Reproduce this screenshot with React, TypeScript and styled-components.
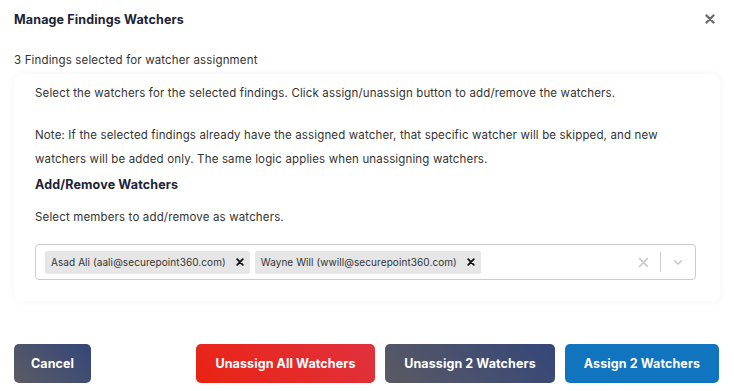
import styled, { createGlobalStyle } from "styled-components";

const GlobalStyle = createGlobalStyle`
  html, body {
    margin: 0;
    padding: 0;
    background: #ffffff;
  }
  body {
    font-family: Inter, "Noto Sans", "Liberation Sans", sans-serif;
    color: #333333;
  }
  * {
    box-sizing: border-box;
  }
`;

const Modal = styled.div`
  width: 734px;
  height: 391px;
  padding: 0 15px 0 14px;
  display: flex;
  flex-direction: column;
`;

const Header = styled.div`
  display: flex;
  align-items: center;
  justify-content: space-between;
  height: 38px;
  padding-right: 4px;
`;

const Title = styled.h2`
  margin: 0;
  font-size: 12.5px;
  font-weight: 700;
  letter-spacing: 0.15px;
  color: #1b2236;
`;

const CloseButton = styled.button`
  border: none;
  background: none;
  padding: 0;
  display: flex;
  color: #6b6b6b;
  cursor: pointer;
`;

const Subtitle = styled.p`
  margin: 12px 0 4px;
  font-size: 11.5px;
  line-height: 20px;
  letter-spacing: 0.15px;
  color: #333333;
`;

const Card = styled.div`
  width: 706px;
  padding: 7px 24px 21px 21px;
  border-radius: 8px;
  background: #ffffff;
  box-shadow: 0 0 10px rgba(0, 0, 0, 0.045);
`;

const Paragraph = styled.p<{ gap?: number }>`
  margin: 0 0 ${(p) => p.gap ?? 0}px;
  font-size: 11.5px;
  line-height: 24px;
  letter-spacing: 0.15px;
  white-space: nowrap;
  color: #333333;
`;

const SectionTitle = styled.h3`
  margin: 4px 0 10px;
  font-size: 12.5px;
  line-height: 20px;
  font-weight: 700;
  letter-spacing: 0.15px;
  color: #1b2236;
`;

const SelectBox = styled.div`
  display: flex;
  align-items: center;
  height: 36px;
  margin-top: 15px;
  border: 1px solid #cccccc;
  border-radius: 4px;
  padding: 0 0 0 9px;
`;

const ChipList = styled.div`
  flex: 1;
  display: flex;
  gap: 5px;
`;

const Chip = styled.div`
  display: flex;
  align-items: center;
  height: 23px;
  background: #e6e6e6;
  border-radius: 2px;
  font-size: 10px;
  letter-spacing: 0.08px;
  color: #333333;
`;

const ChipLabel = styled.span`
  padding: 0 4px 0 6px;
`;

const ChipRemove = styled.span`
  display: flex;
  align-items: center;
  justify-content: center;
  width: 20px;
  height: 100%;
  color: #111111;
`;

const Indicators = styled.div`
  display: flex;
  align-items: center;
  height: 100%;
`;

const IndicatorButton = styled.span`
  display: flex;
  align-items: center;
  justify-content: center;
  width: 34px;
  height: 100%;
  color: #cccccc;
`;

const Separator = styled.span`
  width: 1px;
  height: 20px;
  background: #cccccc;
`;

const Footer = styled.div`
  display: flex;
  align-items: center;
  gap: 10px;
  margin-top: 43px;
`;

const Spacer = styled.div`
  flex: 1;
`;

const variants = {
  cancel: "linear-gradient(45deg, #5b5b63 0%, #34467a 100%)",
  danger: "linear-gradient(45deg, #ea2312 0%, #e0323f 100%)",
  dark: "linear-gradient(45deg, #5a5a62 0%, #34467a 100%)",
  primary: "#1174bf",
};

const ActionButton = styled.button<{ variant: keyof typeof variants; width: number }>`
  width: ${(p) => p.width}px;
  height: 39px;
  border: none;
  border-radius: 5px;
  background: ${(p) => variants[p.variant]};
  color: #ffffff;
  font-family: inherit;
  font-size: 12.5px;
  font-weight: 700;
  letter-spacing: 0.1px;
  cursor: pointer;
`;

function XIcon({ size, stroke }: { size: number; stroke: number }) {
  return (
    <svg width={size} height={size} viewBox="0 0 10 10" fill="none">
      <path d="M1.5 1.5L8.5 8.5M8.5 1.5L1.5 8.5" stroke="currentColor" strokeWidth={stroke} strokeLinecap="round" />
    </svg>
  );
}

function ChevronDown() {
  return (
    <svg width="14" height="14" viewBox="0 0 20 20" fill="currentColor">
      <path d="M4.516 7.548c0.436-0.446 1.043-0.481 1.576 0l3.908 3.747 3.908-3.747c0.533-0.481 1.141-0.446 1.574 0 0.436 0.445 0.408 1.197 0 1.615-0.406 0.418-4.695 4.502-4.695 4.502-0.217 0.223-0.502 0.335-0.787 0.335s-0.57-0.112-0.789-0.335c0 0-4.287-4.084-4.695-4.502s-0.436-1.17 0-1.615z" />
    </svg>
  );
}

const watchers = [
  "Asad Ali (aali@securepoint360.com)",
  "Wayne Will (wwill@securepoint360.com)",
];

export default function App() {
  return (
    <>
      <GlobalStyle />
      <Modal>
        <Header>
          <Title>Manage Findings Watchers</Title>
          <CloseButton aria-label="Close">
            <XIcon size={10} stroke={2.4} />
          </CloseButton>
        </Header>
        <Subtitle>3 Findings selected for watcher assignment</Subtitle>
        <Card>
          <Paragraph gap={18}>
            Select the watchers for the selected findings. Click assign/unassign button to add/remove the watchers.
          </Paragraph>
          <Paragraph>
            Note: If the selected findings already have the assigned watcher, that specific watcher will be skipped, and new
            <br />
            watchers will be added only. The same logic applies when unassigning watchers.
          </Paragraph>
          <SectionTitle>Add/Remove Watchers</SectionTitle>
          <Paragraph>Select members to add/remove as watchers.</Paragraph>
          <SelectBox>
            <ChipList>
              {watchers.map((w) => (
                <Chip key={w}>
                  <ChipLabel>{w}</ChipLabel>
                  <ChipRemove>
                    <XIcon size={8} stroke={2.2} />
                  </ChipRemove>
                </Chip>
              ))}
            </ChipList>
            <Indicators>
              <IndicatorButton>
                <XIcon size={11} stroke={1.6} />
              </IndicatorButton>
              <Separator />
              <IndicatorButton>
                <ChevronDown />
              </IndicatorButton>
            </Indicators>
          </SelectBox>
        </Card>
        <Footer>
          <ActionButton variant="cancel" width={77}>Cancel</ActionButton>
          <Spacer />
          <ActionButton variant="danger" width={179}>Unassign All Watchers</ActionButton>
          <ActionButton variant="dark" width={170}>Unassign 2 Watchers</ActionButton>
          <ActionButton variant="primary" width={154}>Assign 2 Watchers</ActionButton>
        </Footer>
      </Modal>
    </>
  );
}
